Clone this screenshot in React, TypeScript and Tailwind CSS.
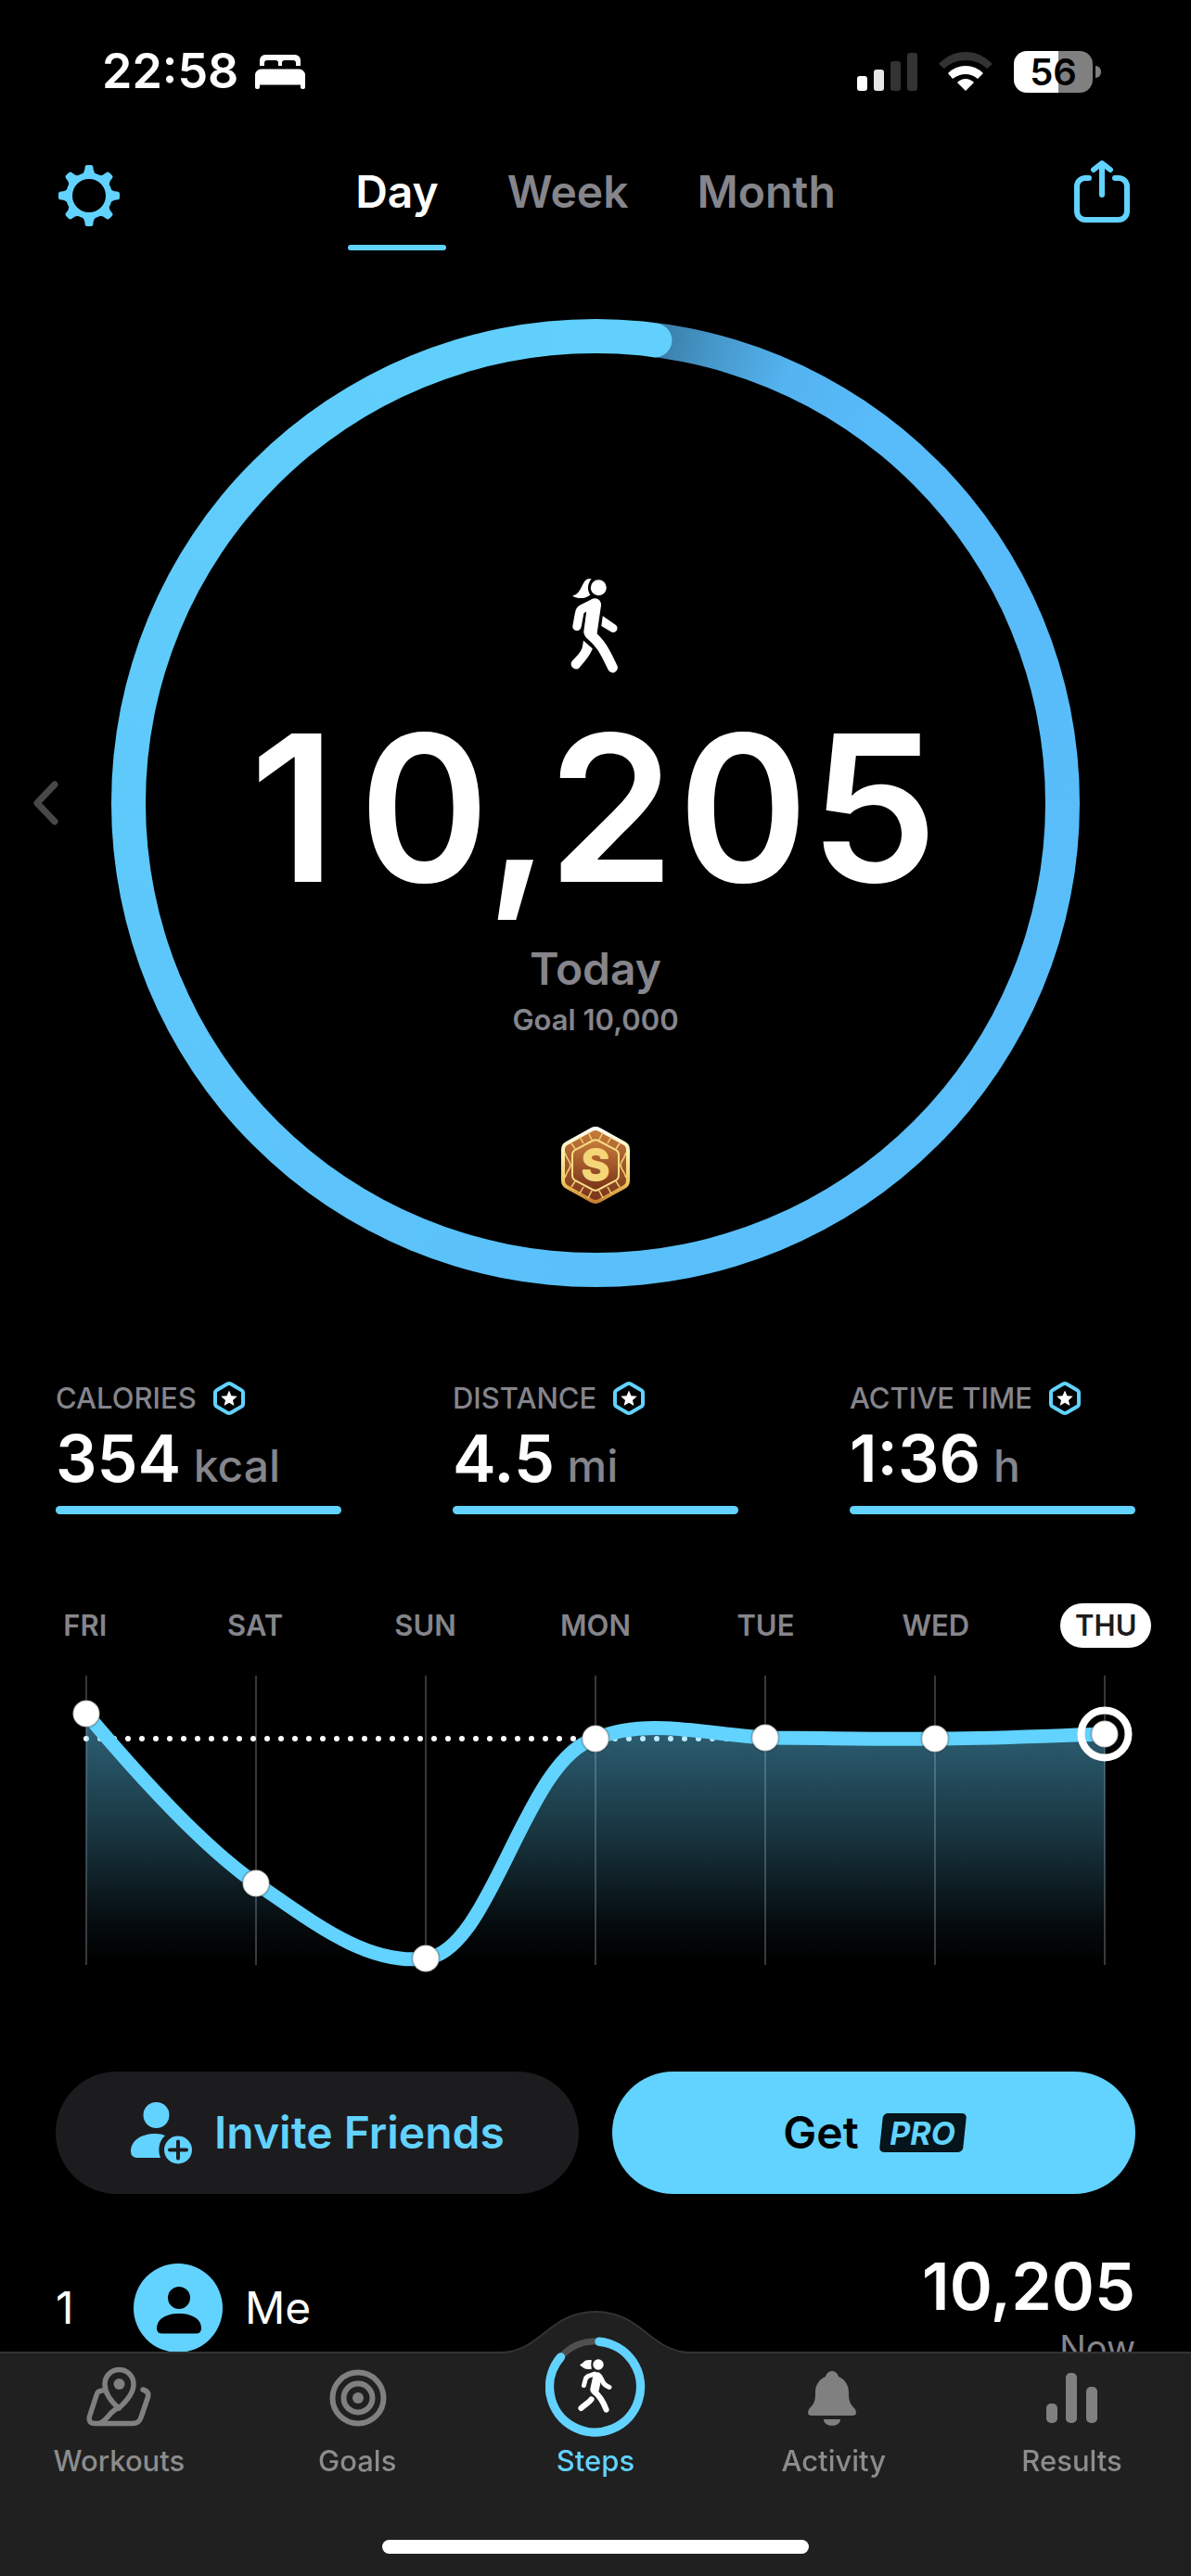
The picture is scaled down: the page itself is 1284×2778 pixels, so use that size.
import React, { useState } from 'react';

const periods = ['Day', 'Week', 'Month'];

const stats = [
  { label: 'CALORIES', value: '354', unit: 'kcal' },
  { label: 'DISTANCE', value: '4.5', unit: 'mi' },
  { label: 'ACTIVE TIME', value: '1:36', unit: 'h' },
];

// Chart points, one for each day of the week
const days = [
  { name: 'FRI', x: 93, y: 48 },
  { name: 'SAT', x: 276, y: 231 },
  { name: 'SUN', x: 459, y: 312 },
  { name: 'MON', x: 642, y: 75 },
  { name: 'TUE', x: 825, y: 74 },
  { name: 'WED', x: 1008, y: 75 },
  { name: 'THU', x: 1191, y: 70 },
];

const curve =
  'M93 48 C152 118 219 192 276 231 C335 271 395 320 459 312 C530 305 566 95 642 75 C697 52 760 70 825 74 C886 74 947 76 1008 75 C1069 75 1130 72 1191 70';

const BedIcon = () => (
  <svg className="w-[54px] h-[37px]" viewBox="0 0 54 37" fill="white">
    <path d="M5 12V6a6 6 0 0 1 6-6h32a6 6 0 0 1 6 6v6h-5V9a3 3 0 0 0-3-3H32a3 3 0 0 0-3 3v3h-4V9a3 3 0 0 0-3-3H13a3 3 0 0 0-3 3v3Z" />
    <path d="M0 35V22a6.500 6.500 0 0 1 6.500-6.500h41A6.500 6.500 0 0 1 54 22v13a2 2 0 0 1-2 2h-1a2 2 0 0 1-2-2v-2.500H5V35a2 2 0 0 1-2 2H2a2 2 0 0 1-2-2Z" />
  </svg>
);

const SignalIcon = () => (
  <svg className="w-[65px] h-[41px]" viewBox="0 0 65 41">
    <rect x="0" y="25" width="11" height="16" rx="3" fill="#fff" />
    <rect x="18" y="18" width="11" height="23" rx="3" fill="#e5e5e5" />
    <rect x="36" y="9" width="11" height="32" rx="3" fill="#333" />
    <rect x="54" y="0" width="11" height="41" rx="3" fill="#333" />
  </svg>
);

const WifiIcon = () => (
  <svg className="w-[58px] h-[42px]" viewBox="0 0 58 42">
    <path d="M0 13Q12 0 29 0T58 13L52 18Q43 9 29 9T6 18Z" fill="#333" />
    <path d="M10 23Q18 15 29 15T48 23L42 29Q36 24 29 24T15 29Z" fill="#fff" />
    <path d="M20 33Q24 29 29 29T38 33L29 42Z" fill="#fff" />
  </svg>
);

const GearIcon = () => (
  <svg className="w-[66px] h-[66px]" viewBox="-33 -33 66 66" fill="#62d2fe">
    <path
      fillRule="evenodd"
      d="M0-25a25 25 0 1 0 0 50a25 25 0 1 0 0-50ZM0-18a18 18 0 1 1 0 36a18 18 0 1 1 0-36Z"
    />
    {[0, 45, 90, 135, 180, 225, 270, 315].map((angle) => (
      <path
        key={angle}
        transform={`rotate(${angle})`}
        d="M-4.500-30Q-4.500-33-2-33H2Q4.500-33 4.500-30Q4.500-25 9-22L0-20L-9-22Q-4.500-25-4.500-30Z"
      />
    ))}
  </svg>
);

const ShareIcon = () => (
  <svg
    className="w-[66px] h-[80px]"
    viewBox="0 0 66 80"
    fill="none"
    stroke="#62d2fe"
    strokeWidth="6"
    strokeLinecap="round"
    strokeLinejoin="round"
  >
    <path d="M19 21H15A9 9 0 0 0 6 30V57A9 9 0 0 0 15 66H51A9 9 0 0 0 60 57V30A9 9 0 0 0 51 21H47" />
    <path d="M33 39V6M24 12L33 5L42 12" />
  </svg>
);

const WalkerIcon = () => (
  <svg className="w-[54px] h-[102px]" viewBox="0 0 54 102" fill="white">
    <circle cx="30.3" cy="9.800" r="8.500" />
    <path d="M22.700 .3C18 5.500 18 12.500 21.300 17.500C16 22.300 8 21.800 2 18.800C13 16 12 2 19 .3Z" />
    <path d="M34.800 40.300L48.500 49.700A4.500 4.500 0 0 1 43.500 57.300L33.300 51Z" />
    <path d="M14 66.700L23.800 75.500C21 83 14 91 9 96.700A5.500 5.500 0 0 1 1.300 89.500C6 84 12 79 13 73Z" />
    <path d="M23 22Q28 20 31 23Q33 25 33 29L28.500 60L19 63Q14 61 14.300 57L17.500 33.500Z" />
    <g fill="none" stroke="white" strokeLinecap="round" strokeLinejoin="round">
      <path d="M25 26.500L13 32.500Q10 34 9.500 38L7 51.500" strokeWidth="9.400" />
      <path d="M20.500 59.500C32 69 36 76 45.500 96" strokeWidth="10.800" />
    </g>
  </svg>
);

const MedalIcon = () => (
  <svg className="w-[74px] h-[83px]" viewBox="0 0 74 83">
    <defs>
      <linearGradient id="medal-rim" x1="0" y1="0" x2="0" y2="1">
        <stop offset="0" stopColor="#ffffff" />
        <stop offset="0.35" stopColor="#fdf0a8" />
        <stop offset="0.75" stopColor="#efc65a" />
        <stop offset="1" stopColor="#c77f30" />
      </linearGradient>
      <linearGradient id="medal-body" x1="0" y1="0" x2="0" y2="1">
        <stop offset="0" stopColor="#c87d3a" />
        <stop offset="1" stopColor="#78321a" />
      </linearGradient>
    </defs>
    <path
      d="M33 3Q37 1 41 3L68 18Q72 20 72 25V58Q72 63 68 65L41 80Q37 82 33 80L6 65Q2 63 2 58V25Q2 20 6 18Z"
      fill="url(#medal-body)"
      stroke="url(#medal-rim)"
      strokeWidth="4"
    />
    <g fill="none" stroke="#f3d277" strokeWidth="1.500">
      <path d="M20 11L24 18M29 6L33 14M54 11L50 18M45 6L41 14M11 18L15 24M63 18L59 24" />
      <path d="M20 72L24 65M29 77L33 69M54 72L50 65M45 77L41 69M11 65L15 59M63 65L59 59" />
      <path d="M4 28Q6 34 9 38Q11 41.500 9 45Q6 49 4 55M70 28Q68 34 65 38Q63 41.500 65 45Q68 49 70 55" />
    </g>
    <path
      d="M34 15Q37 13.500 40 15L59 25Q62 27 62 30V53Q62 56 59 58L40 68Q37 69.500 34 68L15 58Q12 56 12 53V30Q12 27 15 25Z"
      fill="url(#medal-body)"
      stroke="#f6dc86"
      strokeWidth="2"
    />
    <text
      x="37"
      y="58"
      textAnchor="middle"
      fill="#f5d679"
      stroke="#f5d679"
      strokeWidth="2"
      strokeLinejoin="round"
      className="font-['Inter',sans-serif] text-[46px] font-bold"
    >
      S
    </text>
  </svg>
);

const StarBadge = () => (
  <svg className="w-[34px] h-[36px]" viewBox="0 0 34 36">
    <path
      d="M15 2.600Q17 1.500 19 2.600L30 9Q32 10 32 12V24Q32 26 30 27L19 33.400Q17 34.500 15 33.400L4 27Q2 26 2 24V12Q2 10 4 9Z"
      fill="none"
      stroke="#62d2fe"
      strokeWidth="4"
    />
    <path d="M17 9.500L19.500 15.200L25.800 15.800L21 19.900L22.400 26L17 22.800L11.600 26L13 19.900L8.200 15.800L14.500 15.200Z" fill="white" />
  </svg>
);

const InviteIcon = () => (
  <svg className="w-[67px] h-[67px]" viewBox="0 0 67 67" fill="#62d2fe">
    <circle cx="28.500" cy="14" r="14" />
    <path d="M28 34C11 34 1 42 1 53Q1 60 8 60H33C30 52 31 42 38 36Q34 34 28 34Z" />
    <circle cx="52" cy="51.500" r="15" />
    <path d="M52 42.500V60.500M43 51.500H61" stroke="#1c1c1e" strokeWidth="4" strokeLinecap="round" />
  </svg>
);

const Avatar = () => (
  <svg className="w-24 h-24" viewBox="0 0 96 96">
    <circle cx="48" cy="48" r="48" fill="#62d2fe" />
    <circle cx="49" cy="37" r="12" fill="black" />
    <path d="M25 70C25 60 35 54 49 54S73 60 73 70Q73 75.500 67 75.500H31Q25 75.500 25 70Z" fill="black" />
  </svg>
);

const MapIcon = () => (
  <svg className="w-[72px] h-[68px]" viewBox="0 0 72 68" fill="none" stroke="#808080" strokeWidth="5.500" strokeLinecap="round" strokeLinejoin="round">
    <path d="M36 45C28 38 21 29 21 19A15.500 15.500 0 0 1 52 19C52 29 44 38 36 45Z" />
    <circle cx="36.500" cy="19" r="6" fill="#808080" stroke="none" />
    <path d="M19 26Q13 26 12 31L4.500 54Q3 61.500 10 61.500H51Q58 61.500 60 55L67.500 33Q69 27 62 25" />
    <path d="M36 45C28 46 24 58 16 61" />
  </svg>
);

const TargetIcon = () => (
  <svg className="w-[68px] h-[68px]" viewBox="0 0 68 68" fill="none" stroke="#808080" strokeWidth="6">
    <circle cx="35" cy="34" r="27.500" />
    <circle cx="35" cy="34" r="15.500" />
    <circle cx="35" cy="34" r="6" fill="#808080" stroke="none" />
  </svg>
);

const BellIcon = () => (
  <svg className="w-[68px] h-[68px]" viewBox="0 0 68 68" fill="#808080">
    <path d="M32 5C36 5 38 8 39 11C46 14 50 20 50 28C50 37 51 40 56 45Q58 47 58 50Q58 53 54 53H10Q6 53 6 50Q6 47 8 45C13 40 14 37 14 28C14 20 18 14 25 11C26 8 28 5 32 5Z" />
    <path d="M23 57H41C41 61 37 64 32 64S23 61 23 57Z" />
  </svg>
);

const BarsIcon = () => (
  <svg className="w-[68px] h-[68px]" viewBox="0 0 68 68" fill="#808080">
    <rect x="6" y="40" width="12" height="21" rx="5" />
    <rect x="27" y="7" width="12" height="54" rx="5" />
    <rect x="49" y="22" width="12" height="39" rx="5" />
  </svg>
);

const StepsIcon = () => (
  <svg className="w-[108px] h-[108px]" viewBox="0 0 108 108" fill="none" strokeLinecap="round" strokeLinejoin="round">
    <circle cx="53.500" cy="54" r="49" stroke="#505052" strokeWidth="7" />
    <path d="M58 5.200A49 49 0 1 1 16.500 21.900" stroke="#62d2fe" strokeWidth="9.400" />
    <g transform="translate(35 24)" fill="white">
      <circle cx="22" cy="6" r="5.700" />
      <path d="M15 1.500C14 4 14 8 15 10.500C12 11.500 8 11 6 9.500L2 6.500L6 3.500C8 1 12 .5 15 1.500Z" />
      <g fill="none" stroke="white">
        <path d="M18 16L11 18.500Q8.500 20 8 22.500L6.500 28.500" strokeWidth="5" />
        <path d="M21 19L18 33" strokeWidth="9.500" />
        <path d="M24 19L28 26.500Q29 28 34 30.500" strokeWidth="5" />
        <path d="M17.500 35C24 40 27 45 30.500 54.500" strokeWidth="6.200" />
        <path d="M14.500 43.500C12 47 8 49 3.500 53" strokeWidth="6.200" />
      </g>
    </g>
  </svg>
);

const WeekChart = () => (
  <svg className="mt-[23px] block w-full" viewBox="0 0 1284 340" fill="none">
    <defs>
      <linearGradient id="area" gradientUnits="userSpaceOnUse" x1="0" y1="48" x2="0" y2="318">
        <stop offset="0" stopColor="#62d2fe" stopOpacity="0.48" />
        <stop offset="0.5" stopColor="#62d2fe" stopOpacity="0.24" />
        <stop offset="0.85" stopColor="#62d2fe" stopOpacity="0.05" />
        <stop offset="1" stopColor="#62d2fe" stopOpacity="0" />
      </linearGradient>
    </defs>
    {days.map((d) => (
      <line key={d.name} x1={d.x} x2={d.x} y1="7" y2="319" stroke="#38383a" strokeWidth="2" />
    ))}
    <line x1="93" x2="825" y1="75" y2="75" stroke="white" strokeWidth="6" strokeLinecap="round" strokeDasharray="0 15" />
    <path d={`${curve} V319 H93 Z`} fill="url(#area)" />
    <path d={curve} stroke="#62d2fe" strokeWidth="15" />
    {days.map((d) => (
      <circle key={d.name} cx={d.x} cy={d.y} r="14.500" fill="white" stroke="black" strokeOpacity="0.25" strokeWidth="2" />
    ))}
    {/* Selected day */}
    <circle cx="1191" cy="70" r="25.500" stroke="white" strokeWidth="8" />
  </svg>
);

const tabs = [
  { label: 'Workouts', icon: <MapIcon /> },
  { label: 'Goals', icon: <TargetIcon /> },
  { label: 'Steps', icon: <StepsIcon /> },
  { label: 'Activity', icon: <BellIcon /> },
  { label: 'Results', icon: <BarsIcon /> },
];

const App: React.FC = () => {
  const [period, setPeriod] = useState('Day');
  const [tab, setTab] = useState('Steps');

  return (
    <div className="min-h-screen bg-black text-white font-['Inter','Liberation_Sans',sans-serif]">
      {/* Status bar */}
      <div className="flex h-[152px] items-center justify-between pt-[2px] pl-[110px] pr-[97px]">
        <div className="flex items-center gap-[18px]">
          <span className="text-[52px] leading-[60px] font-semibold">22:58</span>
          <BedIcon />
        </div>
        <div className="flex items-center gap-[23px]">
          <SignalIcon />
          <WifiIcon />
          <div className="flex items-center gap-[3px]">
            <div className="flex h-[45px] w-[85px] items-center justify-center rounded-[14px] bg-[linear-gradient(90deg,#fff_56%,#808080_56%)] text-[40px] leading-[45px] font-semibold text-black">56</div>
            <div className="h-[13px] w-[6px] rounded-r-full bg-[#808080]"></div>
          </div>
        </div>
      </div>

      {/* Navigation */}
      <header className="flex items-center justify-between px-[63px]">
        <button type="button" aria-label="Settings">
          <GearIcon />
        </button>
        <div className="flex gap-[58px]">
          {periods.map((p) => (
            <button
              key={p}
              type="button"
              onClick={() => setPeriod(p)}
              className={`px-2 text-[48px] leading-[110px] font-semibold ${period === p ? 'text-white' : 'text-[#85858b]'}`}
            >
              {p}
              <span className={`mt-[2px] -mx-2 block h-[6px] rounded-full ${period === p ? 'bg-[#62d2fe]' : 'bg-transparent'}`}></span>
            </button>
          ))}
        </div>
        <button type="button" aria-label="Share">
          <ShareIcon />
        </button>
      </header>

      {/* Progress ring */}
      <main>
        <section className="mt-[74px] flex items-center">
          <button type="button" aria-label="Previous day" className="flex w-[120px] shrink-0 pl-[36px]">
            <svg className="w-[28px] h-[48px]" viewBox="0 0 28 48" fill="none" stroke="#48484a" strokeWidth="7" strokeLinecap="round" strokeLinejoin="round">
              <path d="M23 4L4 24L23 44" />
            </svg>
          </button>
          <div className="relative aspect-square flex-1 rounded-full bg-[conic-gradient(#61d0fc_7deg,#397aa3_7deg,#4596c8_14deg,#54b3f0_24deg,#58bbfa_36deg,#5ac0fa_180deg,#5fcbfb_290deg,#61d0fc_360deg)] p-[37px]">
            <svg className="absolute inset-0 h-full w-full" viewBox="0 0 1044 1044">
              <circle cx="586" cy="23" r="18.500" fill="#61d0fc" />
            </svg>
            <div className="flex h-full flex-col items-center rounded-full bg-black pt-[243px]">
              <WalkerIcon />
              <p className="mt-[35px] text-[220px] leading-[220px] font-semibold">
                1<span className="ml-6 tabular-nums">0,205</span>
              </p>
              <p className="mt-[34px] text-[48px] leading-[60px] font-semibold text-[#85858b]">Today</p>
              <p className="mt-[5px] text-[31px] leading-[40px] font-semibold text-[#85858b]">Goal 10,000</p>
              <div className="mt-[95px]">
                <MedalIcon />
              </div>
            </div>
          </div>
          <div className="w-[120px] shrink-0"></div>
        </section>

        {/* Stats */}
        <section className="mt-[102px] grid grid-cols-3 gap-[120px] px-[60px]">
          {stats.map((s) => (
            <div key={s.label}>
              <div className="flex items-center gap-[18px] text-[31px] leading-[36px] font-medium whitespace-nowrap text-[#85858b]">
                {s.label}
                <StarBadge />
              </div>
              <div className="mt-3 text-[70px] leading-[70px] font-semibold">
                {s.value} <span className="-ml-1 text-[48px] leading-[50px] font-medium text-[#85858b]">{s.unit}</span>
              </div>
              <div className="mt-4 h-[9px] rounded-full bg-[#62d2fe]"></div>
            </div>
          ))}
        </section>

        {/* Week */}
        <section className="mt-[96px]">
          <div className="grid grid-cols-7">
            {days.map((d) => (
              <div key={d.name} className="flex justify-center">
                <span className={`flex h-12 items-center rounded-full px-4 text-[31px] font-semibold ${d.name === 'THU' ? 'bg-white text-[#1c1c1e]' : 'text-[#85858b]'}`}>
                  {d.name}
                </span>
              </div>
            ))}
          </div>
          <WeekChart />
        </section>

        <div className="mt-[94px] grid grid-cols-2 gap-9 px-[60px]">
          <button type="button" className="flex h-[132px] items-center justify-center gap-6 rounded-full bg-[#1c1c1e] text-[48px] font-semibold text-[#62d2fe]">
            <InviteIcon />
            Invite Friends
          </button>
          <button type="button" className="flex h-[132px] items-center justify-center gap-6 rounded-full bg-[#62d2fe] text-[48px] font-semibold text-black">
            Get
            <span className="relative flex h-[42px] w-[90px] items-center justify-center text-[34px] font-bold italic text-[#62d2fe]">
              <span className="absolute inset-0 -skew-x-6 rounded-[5px] bg-[#06141b]"></span>
              <span className="relative">PRO</span>
            </span>
          </button>
        </div>

        {/* Leaderboard */}
        <section className="mt-[65px] flex items-start px-[60px] text-[48px]">
          <div className="flex h-[116px] flex-1 items-center">
            <span className="w-[84px]">1</span>
            <Avatar />
            <span className="pl-6">Me</span>
          </div>
          <div className="text-right">
            <p className="text-[70px] leading-[70px] font-semibold">10,205</p>
            <p className="mt-[9px] text-[38px] leading-[44px] text-[#85858b]">Now</p>
          </div>
        </section>
      </main>

      {/* Tab bar */}
      <nav className="fixed inset-x-0 bottom-0 pt-7">
        <div className="absolute inset-x-0 top-11 bottom-0 border-t-2 border-[#333334] bg-[#202020]"></div>
        <svg className="absolute top-0 left-1/2 h-[48px] w-[204px] -translate-x-1/2" viewBox="0 -1 204 48">
          <path d="M0 45C42 45 52 0 102 0S162 45 204 45V48H0Z" fill="#202020" />
          <path d="M0 44C42 44 52 0 102 0S162 44 204 44" fill="none" stroke="#333334" strokeWidth="2" />
        </svg>
        <div className="relative grid grid-cols-5 items-end">
          {tabs.map((t) => (
            <button key={t.label} type="button" onClick={() => setTab(t.label)} className="flex flex-col items-center">
              {t.icon}
              <span className={`text-[31px] leading-[40px] font-medium ${t.label === 'Steps' ? 'mt-[6px]' : 'mt-[14px]'} ${tab === t.label ? 'text-[#62d2fe]' : 'text-[#8c8c8c]'}`}>
                {t.label}
              </span>
            </button>
          ))}
        </div>
        <div className="relative mx-auto mt-[65px] mb-6 h-[15px] w-[460px] rounded-full bg-white"></div>
      </nav>
    </div>
  );
};

export default App;
